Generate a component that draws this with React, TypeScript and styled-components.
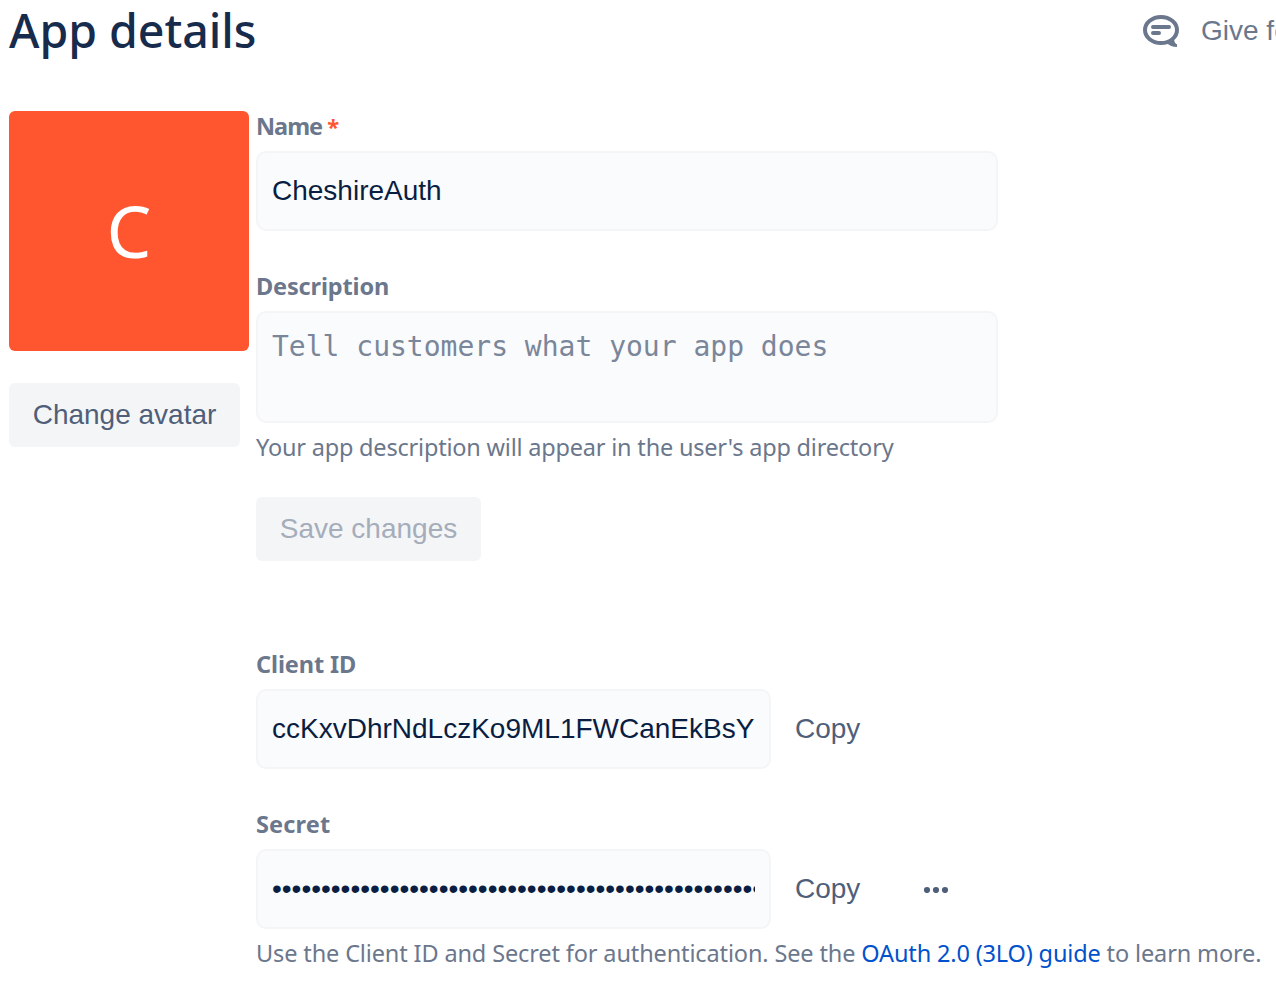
import React from "react";
import styled, { createGlobalStyle } from "styled-components";

const sans = `"Noto Sans", "Open Sans", sans-serif`;
const ui = `"Liberation Sans", Arial, sans-serif`;

const GlobalStyle = createGlobalStyle`
  *, *::before, *::after { box-sizing: border-box; }
  html, body { margin: 0; background: #fff; overflow: hidden; }
  body { font-family: ${sans}; color: #172b4d; }
`;

const Page = styled.main`
  width: 1276px;
  height: 985px;
  padding-left: 9px;
  overflow: hidden;
`;

const Header = styled.header`
  display: flex;
  justify-content: space-between;
  height: 111px;
`;

const Title = styled.h1`
  margin: 0;
  font-size: 46.5px;
  font-weight: 500;
  line-height: 61px;
  letter-spacing: -0.05px;
  white-space: nowrap;
`;

const Feedback = styled.a`
  display: flex;
  align-items: center;
  gap: 21px;
  flex: none;
  width: 134px;
  height: 62px;
  color: #6b778c;
  font: 28px ${ui};
  white-space: nowrap;
  overflow: hidden;

  svg { flex: none; }
`;

const Columns = styled.div`
  display: grid;
  grid-template-columns: 247px 1fr;
`;

const Side = styled.aside`
  display: flex;
  flex-direction: column;
  align-items: flex-start;
  gap: 32px;
`;

const Avatar = styled.div`
  display: flex;
  align-items: center;
  justify-content: center;
  width: 240px;
  height: 240px;
  padding-bottom: 2px;
  border-radius: 6px;
  background: #ff5630;
  color: #fff;
  font-size: 71px;
  line-height: 1;
`;

const Button = styled.button<{ $width: number }>`
  width: ${(p) => p.$width}px;
  height: 64px;
  padding: 0;
  border: 0;
  border-radius: 6px;
  background: #f4f5f7;
  color: #505f79;
  font: 28px/64px ${ui};
  white-space: nowrap;

  &:disabled { color: #a5adba; }
`;

const PlainButton = styled.button`
  height: 64px;
  padding: 0;
  border: 0;
  background: none;
  color: #505f79;
  font: 28px/64px ${ui};
`;

const MoreButton = styled(PlainButton)`
  display: flex;
  align-items: center;
  margin-left: 63px;
`;

const Form = styled.section`
  display: flex;
  flex-direction: column;
  align-items: flex-start;
`;

const Label = styled.label<{ $spacing?: number }>`
  display: block;
  height: 40px;
  font-size: 23.5px;
  font-weight: 700;
  line-height: 31px;
  letter-spacing: ${(p) => p.$spacing ?? 0}px;
  color: #6b778c;
  white-space: nowrap;
`;

const Required = styled.span`
  margin-left: 5px;
  font-size: 22px;
  color: #ff5630;
`;

const Input = styled.input<{ $width: number }>`
  display: block;
  width: ${(p) => p.$width}px;
  height: 80px;
  padding: 0 14px;
  border: 2px solid #f4f5f7;
  border-radius: 10px;
  outline: none;
  background: #fafbfc;
  color: #091e42;
  font: 28px ${ui};
`;

const TextArea = styled.textarea`
  display: block;
  width: 742px;
  height: 112px;
  padding: 14px 14px 10px;
  border: 2px solid #f4f5f7;
  border-radius: 10px;
  outline: none;
  resize: none;
  overflow: hidden;
  background: #fafbfc;
  font: 28px/40px "DejaVu Sans Mono", monospace;

  &::placeholder { color: #7a869a; opacity: 1; }
`;

const Field = styled.div<{ $gap: number }>`
  margin-bottom: ${(p) => p.$gap}px;
`;

const Row = styled.div`
  display: flex;
  align-items: center;

  > ${Input} { margin-right: 24px; }
`;

const Help = styled.p<{ $spacing: number }>`
  margin: 7px 0 0;
  font-size: 23.5px;
  line-height: 35px;
  letter-spacing: ${(p) => p.$spacing}px;
  color: #6b778c;
  white-space: nowrap;
`;

const Link = styled.a`
  color: #0052cc;
  letter-spacing: -0.15px;
  text-decoration: none;
`;

const FeedbackIcon = () => (
  <svg width="38" height="34" viewBox="0 0 38 34" fill="none" stroke="#6b778c">
    <ellipse cx="19" cy="16" rx="16" ry="13" strokeWidth="4" />
    <path d="M24 28.5 L32 23.5 C32 27.5 33 29.5 35 30.5 V33 C30.5 33 27.5 31.5 24 28.5Z" fill="#6b778c" stroke="none" />
    <path d="M11 13H27M11 19H17" strokeWidth="4" strokeLinecap="round" />
  </svg>
);

const MoreIcon = () => (
  <svg width="26" height="8" viewBox="0 0 26 8" fill="#505f79">
    <circle cx="4" cy="5" r="3.1" />
    <circle cx="13" cy="5" r="3.1" />
    <circle cx="22" cy="5" r="3.1" />
  </svg>
);

export default function App() {
  return (
    <>
      <GlobalStyle />
      <Page>
        <Header>
          <Title>App details</Title>
          <Feedback>
            <FeedbackIcon />
            Give feedback
          </Feedback>
        </Header>
        <Columns>
          <Side>
            <Avatar>C</Avatar>
            <Button $width={231}>Change avatar</Button>
          </Side>
          <Form>
            <Field $gap={40}>
              <Label $spacing={-1}>
                Name<Required>*</Required>
              </Label>
              <Input $width={742} defaultValue="CheshireAuth" />
            </Field>
            <Field $gap={32}>
              <Label $spacing={-0.15}>Description</Label>
              <TextArea placeholder="Tell customers what your app does" />
              <Help $spacing={-0.2}>Your app description will appear in the user's app directory</Help>
            </Field>
            <Field $gap={88}>
              <Button $width={225} disabled>Save changes</Button>
            </Field>
            <Field $gap={40}>
              <Label $spacing={-0.1}>Client ID</Label>
              <Row>
                <Input $width={515} defaultValue="ccKxvDhrNdLczKo9ML1FWCanEkBsY" />
                <PlainButton>Copy</PlainButton>
              </Row>
            </Field>
            <Field $gap={0}>
              <Label $spacing={0.15}>Secret</Label>
              <Row>
                <Input $width={515} type="password" defaultValue={"x".repeat(64)} />
                <PlainButton>Copy</PlainButton>
                <MoreButton aria-label="More actions">
                  <MoreIcon />
                </MoreButton>
              </Row>
              <Help $spacing={-0.13}>
                Use the Client ID and Secret for authentication. See the{" "}
                <Link>OAuth 2.0 (3LO) guide</Link> to learn more.
              </Help>
            </Field>
          </Form>
        </Columns>
      </Page>
    </>
  );
}
